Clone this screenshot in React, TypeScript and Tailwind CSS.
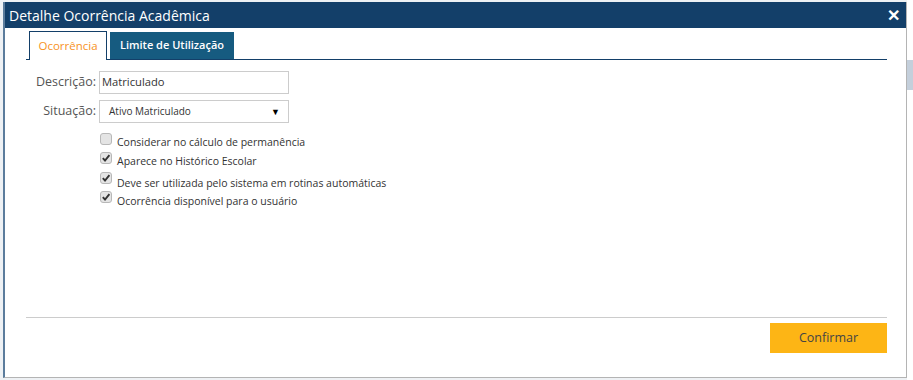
import React from "react";

const Check = ({ checked }: { checked: boolean }) => (
  <svg width="12" height="12" viewBox="0 0 12 12" className="shrink-0">
    <rect x="0.5" y="0.5" width="11" height="11" rx="2.5" fill="#e4e4e4" stroke="#b8b8b8" />
    {checked && <path d="M2.8 6.2 L5 8.5 L9.4 3.2" fill="none" stroke="#333" strokeWidth="1.9" />}
  </svg>
);

const options = [
  { label: "Considerar no cálculo de permanência", checked: false, h: "h-[19px]", tx: "mt-[2px]" },
  { label: "Aparece no Histórico Escolar", checked: true, h: "h-[20px]", tx: "mt-[2px]" },
  { label: "Deve ser utilizada pelo sistema em rotinas automáticas", checked: true, h: "h-[19px]", tx: "mt-[4px]" },
  { label: "Ocorrência disponível para o usuário", checked: true, h: "h-[19px]", tx: "mt-[3px]" },
];

export default function App() {
  return (
    <div
      className="w-[913px] h-[380px] bg-[#eef1f4] flex overflow-hidden"
      style={{ fontFamily: '"Open Sans", "Noto Sans", sans-serif' }}
    >
      <div className="w-[3px]" />
      <div className="mt-[2px] w-[904px] h-[376px] flex flex-col bg-white border-l-2 border-l-[#5b7c9c] border-r border-r-[#b4b4b4] border-b border-b-[#b4b4b4]">
        {/* header */}
        <div className="h-[26px] bg-[#133f69] flex items-center justify-between pl-[4px] pr-[6px]">
          <span className="text-white text-[14px]">Detalhe Ocorrência Acadêmica</span>
          <span className="text-white text-[16px] font-bold leading-none">✕</span>
        </div>

        <div className="flex-1 flex flex-col pl-[21px] pr-[19px]">
          {/* tabs */}
          <div className="flex items-end gap-[3px] pl-[3px] pt-[3px] border-b border-[#133f69] h-[32px]">
            <div className="h-[29px] w-[78px] justify-center border border-b-0 border-[#133f69] bg-white flex items-center text-[11.5px] text-[#f7921e] -mb-px">
              Ocorrência
            </div>
            <div className="h-[27px] w-[124px] justify-center bg-[#165b80] flex items-center text-[11px] font-semibold text-white">
              Limite de Utilização
            </div>
          </div>

          {/* form */}
          <div className="pt-[11px] flex flex-col gap-[6px] text-[#333]">
            <div className="flex items-center">
              <span className="w-[73px] text-right pr-[3px] text-[#555] text-[12.5px]">Descrição:</span>
              <div className="w-[190px] h-[23px] border border-[#ccc] flex items-center px-[2px] text-[11.2px]">Matriculado</div>
            </div>
            <div className="flex items-center">
              <span className="w-[73px] text-right pr-[3px] text-[#555] text-[12.5px]">Situação:</span>
              <div className="w-[190px] h-[23px] border border-[#ccc] flex items-center justify-between pl-[9px] pr-[8px]">
                <span className="text-[10px]">Ativo Matriculado</span>
                <span className="text-[9px] text-black">▼</span>
              </div>
            </div>
          </div>

          <div className="pl-[74px] pt-[10px] flex flex-col text-[10.5px] text-[#333]">
            {options.map((o) => (
              <div key={o.label} className={`flex items-start gap-[5px] ${o.h}`}>
                <Check checked={o.checked} />
                <span className={`leading-[14px] ${o.tx}`}>{o.label}</span>
              </div>
            ))}
          </div>

          <div className="flex-1" />

          {/* footer */}
          <div className="border-t border-[#cccccc] pt-[5px] pb-[24px] flex justify-end">
            <button className="w-[117px] h-[30px] bg-[#fdb515] text-[#444] text-[12.5px]">Confirmar</button>
          </div>
        </div>
      </div>
      <div className="flex-1 bg-white pt-[60px]">
        <div className="h-[30px] bg-[#c4cfdb]" />
      </div>
    </div>
  );
}
